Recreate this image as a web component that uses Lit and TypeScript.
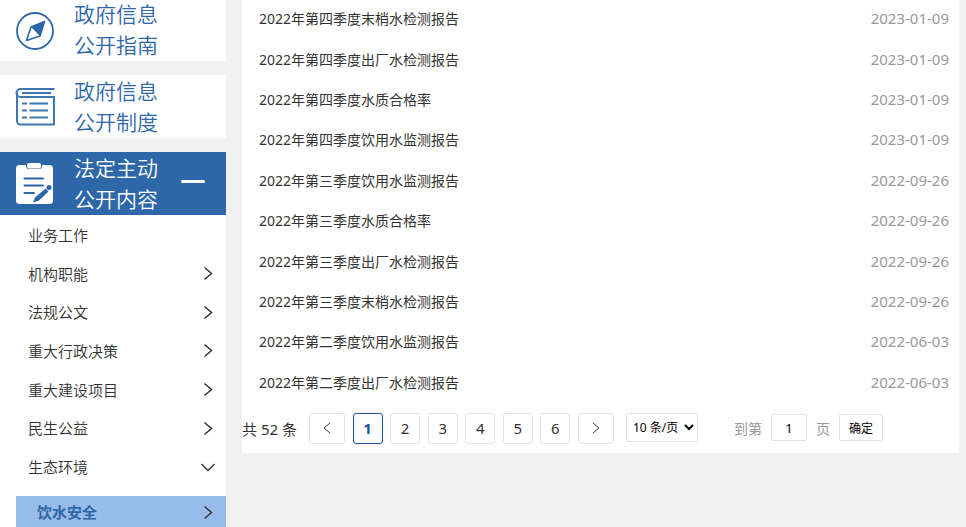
import { LitElement, html, css, svg, nothing } from "lit";
import { customElement, property, state } from "lit/decorators.js";
import { classMap } from "lit/directives/class-map.js";

const fonts = css`"Noto Sans", "Noto Sans CJK SC", sans-serif`;

const compass = svg`
  <circle cx="20" cy="22" r="18" fill="none" stroke="currentColor" stroke-width="1.800"/>
  <path d="M29.500 12.500L25 27L11.500 31.500L16 18Z" fill="none" stroke="currentColor" stroke-width="1.600" stroke-linejoin="round"/>
  <path d="M29.500 12.500L25 27L16 18Z" fill="currentColor"/>`;

const book = svg`
  <path d="M39.500 3H5.500A4 4 0 0 0 5.500 11H39V38.500H5.500A3.500 3.500 0 0 1 2 35V7" fill="none" stroke="#3f77b3" stroke-width="2"/>
  <path d="M7 7H36M7 17.500H12M14.500 17.500H33M7 24.500H12M14.500 24.500H33M7 31.500H12M14.500 31.500H33" fill="none" stroke="#3f77b3" stroke-width="1.800"/>`;

const clipboard = svg`
  <path d="M4.500 2H11V3Q11 6 14 6H24Q27 6 27 3V2H34.500Q38 2 38 5.500V37.500Q38 41 34.500 41H4.500Q1 41 1 37.500V5.500Q1 2 4.500 2Z" fill="#fff"/>
  <rect x="12" y="0" width="14" height="5.500" rx="2" fill="#fff"/>
  <path d="M9.500 15.500H28M9.500 22.500H28M9.500 30H19" stroke="#2d67a8" stroke-width="2" stroke-linecap="round"/>
  <path d="M30.500 25.500L33.500 28.500L24 37.500L18 39.500L20 34.500Z" fill="#2d67a8"/>
  <circle cx="34" cy="24.500" r="2.500" fill="#2d67a8"/>`;

interface Menu { label: string; arrow?: "right" | "down"; }

@customElement("gov-sidebar")
export class GovSidebar extends LitElement {
  static styles = css`
    :host { display: block; font-family: ${fonts}; color: #333; }
    a { color: inherit; text-decoration: none; }
    nav { display: flex; flex-direction: column; gap: 14px; margin-top: -2px; }
    .card {
      display: grid; grid-template-columns: 40px 88px 24px; column-gap: 19px;
      align-items: center; padding: 0 0 0 15px; height: 63px;
      background: #fff; color: #2d67a8; font-size: 21px; line-height: 31px;
    }
    .card.active { background: #2d67a8; color: #fff; }
    .card svg { width: 40px; height: 42px; }
    .title { display: block; white-space: pre-line; font-weight: 350; }
    .minus { width: 24px; height: 3px; margin-bottom: 4px; border-radius: 2px; background: #fff; }
    .panel { background: #fff; }
    .menu { list-style: none; margin: 0; padding: 0; display: grid; grid-auto-rows: 1fr; min-height: 271px; }
    .menu a, .sub { display: flex; align-items: center; justify-content: space-between; }
    .menu a { height: 100%; padding: 0 10px 0 28px; font-size: 15px; font-weight: 350; }
    .arrow { width: 16px; height: 16px; fill: none; stroke: #333; stroke-width: 1.5; }
    .sub {
      height: 31px; margin: 10px 0 0 16px; padding: 0 10px 0 21px;
      background: #98bce9; color: #2d67a8; font-size: 15px; font-weight: 700;
    }
  `;

  private cards = [
    { title: "政府信息\n公开指南", icon: compass },
    { title: "政府信息\n公开制度", icon: book },
    { title: "法定主动\n公开内容", icon: clipboard, active: true },
  ];

  private menus: Menu[] = [
    { label: "业务工作" },
    { label: "机构职能", arrow: "right" },
    { label: "法规公文", arrow: "right" },
    { label: "重大行政决策", arrow: "right" },
    { label: "重大建设项目", arrow: "right" },
    { label: "民生公益", arrow: "right" },
    { label: "生态环境", arrow: "down" },
  ];

  private arrow(dir: "right" | "down") {
    return html`<svg class="arrow" viewBox="0 0 16 16" aria-hidden="true">
      <path d=${dir === "right" ? "M4.5 2.5L11.5 8.5L4.5 14.5" : "M1.5 5L8 11.500L14.500 5"}></path></svg>`;
  }

  render() {
    return html`
      <nav>
        ${this.cards.map((c) => html`
          <a href="#" class=${classMap({ card: true, active: !!c.active })}>
            <svg viewBox="0 0 40 42" aria-hidden="true">${c.icon}</svg>
            <span class="title">${c.title}</span>
            ${c.active ? html`<span class="minus"></span>` : nothing}
          </a>`)}
      </nav>
      <div class="panel">
        <ul class="menu">
          ${this.menus.map((m) => html`<li><a href="#">${m.label}${m.arrow ? this.arrow(m.arrow) : nothing}</a></li>`)}
        </ul>
        <a class="sub" href="#">饮水安全${this.arrow("right")}</a>
      </div>`;
  }
}

@customElement("gov-pager")
export class GovPager extends LitElement {
  @property({ type: Number }) total = 0;
  @state() private current = 1;

  static styles = css`
    :host { display: flex; align-items: center; font-family: ${fonts}; font-size: 14px; color: #333; white-space: nowrap; }
    button, input, select {
      box-sizing: border-box; margin: 0; padding: 0; font-family: inherit;
      background: #fff; border: 1px solid #e2e2e2; border-radius: 2px; color: #000;
    }
    .total { width: 67px; font-size: 15px; }
    .pages { display: flex; justify-content: space-between; width: 305px; }
    .pages button { width: 30px; height: 31px; padding-bottom: 2px; border-radius: 3px; color: #333; font-size: 15px; }
    .pages .step { width: 36px; display: grid; place-items: center; }
    .pages .current { border-color: #1e50a2; color: #1e50a2; font-weight: 700; }
    .step svg { width: 12px; height: 12px; fill: none; stroke: #333; }
    select { width: 72px; height: 29px; margin: 0 36px 2px 12px; padding-left: 2px; font-size: 12px; }
    .jump { display: flex; align-items: center; gap: 9px; margin-bottom: 2px; color: #999; }
    .jump input { width: 36px; height: 27px; text-align: center; font-size: 13px; }
    .jump button { width: 44px; height: 27px; font-size: 12px; }
  `;

  render() {
    return html`
      <span class="total">共 ${this.total} 条</span>
      <div class="pages">
        <button class="step" aria-label="上一页" @click=${() => (this.current = Math.max(1, this.current - 1))}>
          <svg viewBox="0 0 12 12"><path d="M9 1L3 6L9 11"></path></svg></button>
        ${[1, 2, 3, 4, 5, 6].map((n) => html`
          <button class=${classMap({ current: n === this.current })} @click=${() => (this.current = n)}>${n}</button>`)}
        <button class="step" aria-label="下一页" @click=${() => (this.current = Math.min(6, this.current + 1))}>
          <svg viewBox="0 0 12 12"><path d="M3 1L9 6L3 11"></path></svg></button>
      </div>
      <select aria-label="每页条数"><option>10 条/页</option><option>20 条/页</option></select>
      <div class="jump">
        <label for="page">到第</label>
        <input id="page" type="text" .value=${String(this.current)}>
        <span>页</span>
        <button>确定</button>
      </div>`;
  }
}

@customElement("app-root")
export class AppRoot extends LitElement {
  static styles = css`
    :host {
      display: flex; align-items: flex-start; gap: 16px; box-sizing: border-box;
      min-height: 100vh; padding-right: 7px; overflow: hidden;
      background: #f1f1f1; font-family: ${fonts};
    }
    gov-sidebar { flex: 0 0 226px; }
    main { flex: 1; min-width: 0; background: #fff; margin-top: -2px; padding-bottom: 9px; }
    .list { list-style: none; margin: 0 0 11px; padding: 0 10px 0 17px; display: grid; grid-auto-rows: 1fr; min-height: 404px; }
    .row { display: flex; align-items: center; justify-content: space-between; }
    .row a { color: #333; text-decoration: none; font-size: 14px; }
    .row time { color: #999; font-size: 15px; }
  `;

  private reports = [
    ["2022年第四季度末梢水检测报告", "2023-01-09"],
    ["2022年第四季度出厂水检测报告", "2023-01-09"],
    ["2022年第四季度水质合格率", "2023-01-09"],
    ["2022年第四季度饮用水监测报告", "2023-01-09"],
    ["2022年第三季度饮用水监测报告", "2022-09-26"],
    ["2022年第三季度水质合格率", "2022-09-26"],
    ["2022年第三季度出厂水检测报告", "2022-09-26"],
    ["2022年第三季度末梢水检测报告", "2022-09-26"],
    ["2022年第二季度饮用水监测报告", "2022-06-03"],
    ["2022年第二季度出厂水检测报告", "2022-06-03"],
  ];

  render() {
    return html`
      <gov-sidebar></gov-sidebar>
      <main>
        <ul class="list">
          ${this.reports.map(([title, date]) => html`
            <li class="row"><a href="#">${title}</a><time datetime=${date}>${date}</time></li>`)}
        </ul>
        <gov-pager .total=${52}></gov-pager>
      </main>`;
  }
}
